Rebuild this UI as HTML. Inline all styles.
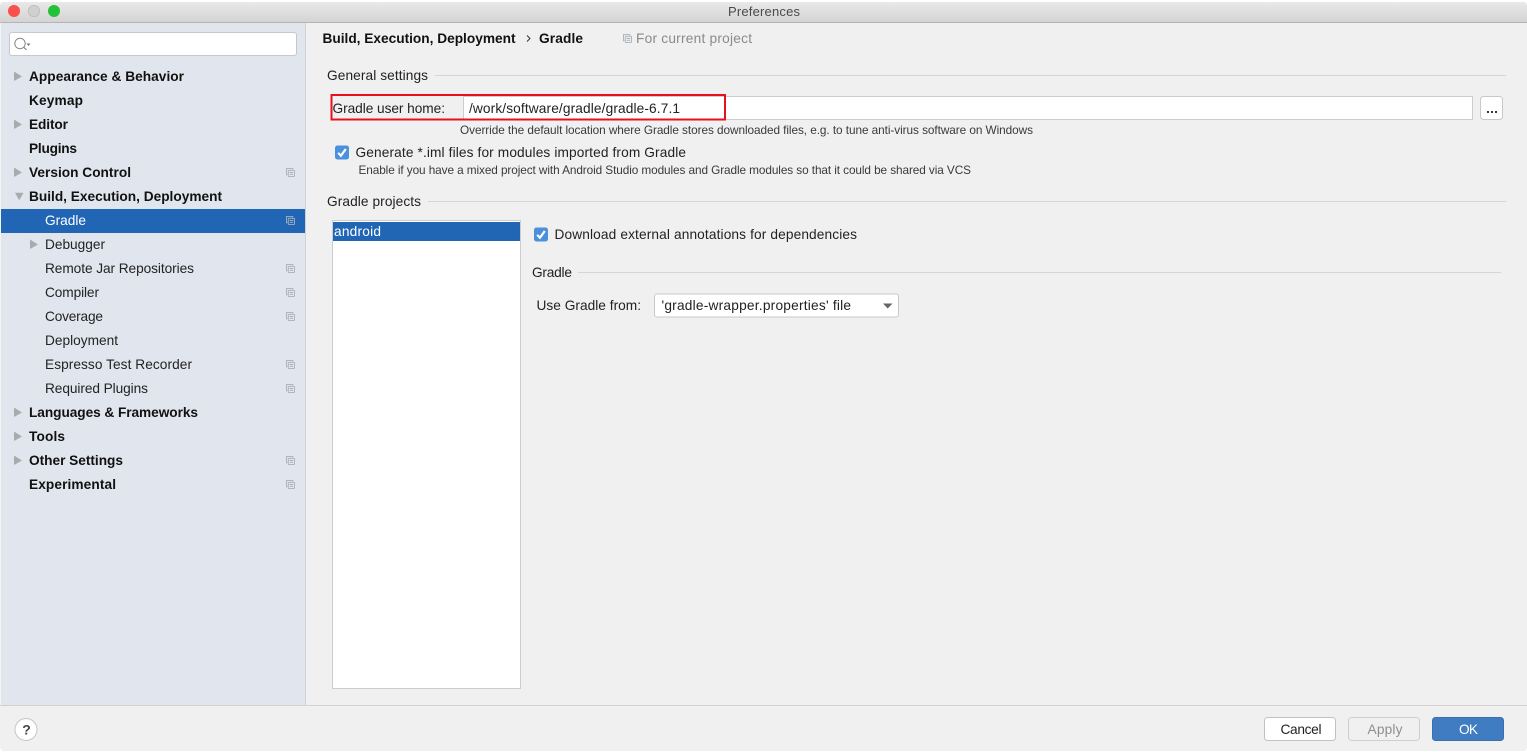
<!DOCTYPE html>
<html><head><meta charset="utf-8"><title>Preferences</title>
<style>
html,body{margin:0;padding:0;background:#fff;width:1527px;height:752px;overflow:hidden}
svg{display:block;filter:blur(.25px)}
text{font-family:"Liberation Sans",sans-serif;font-size:13.7px;fill:#222}
.b{font-weight:bold;font-size:13.7px;fill:#111}
.s{font-size:11.8px;fill:#3a3a3a}
</style></head><body>
<svg width="1527" height="752" viewBox="0 0 1527 752" xmlns="http://www.w3.org/2000/svg">
<defs>
<linearGradient id="tb" x1="0" y1="0" x2="0" y2="1"><stop offset="0" stop-color="#e9e9e9"/><stop offset="1" stop-color="#d3d3d3"/></linearGradient>
<symbol id="cp" viewBox="0 0 10 10" overflow="visible"><path d="M7.5 1.5V.5H.5V7.5H1.5" fill="none" stroke="#a9b0b8" stroke-width="1"/><rect x="2.5" y="2.5" width="7" height="7" rx="1" fill="none" stroke="#a9b0b8" stroke-width="1"/><path d="M4 5H8M4 7H8" stroke="#a9b0b8" stroke-width="1"/></symbol>
<symbol id="ck" viewBox="0 0 14 14"><rect width="14" height="14" rx="2.5" fill="#4a90dc"/><path d="M3.2 7.300L5.900 10.300L10.800 3.500" fill="none" stroke="#fff" stroke-width="2.200"/></symbol>
</defs>
<rect x="0" y="2" width="1527" height="749" rx="4" fill="#f0f0f0"/>
<!-- title bar -->
<path d="M0 22V6Q0 2 4 2H1523Q1527 2 1527 6V22Z" fill="url(#tb)"/>
<rect x="0" y="22" width="1527" height="1" fill="#b4b4b4"/>
<circle cx="14" cy="11" r="6" fill="#fb4f4b"/><circle cx="34" cy="11" r="5.6" fill="#d0d0d0" stroke="#bfbfbf"/><circle cx="54" cy="11" r="6" fill="#22c13a"/>
<text x="728" y="16" textLength="72" style="font-size:13px;fill:#4a4a4a">Preferences</text>
<!-- sidebar -->
<rect x="1" y="23" width="304" height="682" fill="#e1e6ee"/>
<rect x="305" y="23" width="1" height="682" fill="#cfd2d6"/>
<rect x="0" y="23" width="1" height="682" fill="#f4f4f4"/>
<rect x="9.500" y="32.500" width="287" height="23" rx="2.500" fill="#fff" stroke="#c6c8cb"/>
<circle cx="20" cy="43.500" r="5.200" fill="none" stroke="#858585" stroke-width="1"/><path d="M23.800 47.300L26.500 50" stroke="#858585" stroke-width="1.200"/><path d="M26.500 43.500H30.500L28.500 46Z" fill="#777"/>
<rect x="1" y="209" width="304" height="24" fill="#2066b5"/>
<g fill="#a8aaad">
<path d="M14 71.500L22 76.500L14 81Z"/><path d="M14 119.500L22 124.500L14 129Z"/><path d="M14 167.500L22 172.500L14 177Z"/><path d="M15 192.700H23.500L19.200 200.300Z"/><path d="M30 239.500L38 244.500L30 249Z"/><path d="M14 407.500L22 412.500L14 417Z"/><path d="M14 431.500L22 436.500L14 441Z"/><path d="M14 455.500L22 460.500L14 465Z"/>
</g>
<g>
<text class="b" x="29" y="81" textLength="155">Appearance &amp; Behavior</text>
<text class="b" x="29" y="105" textLength="54">Keymap</text>
<text class="b" x="29" y="129" textLength="39">Editor</text>
<text class="b" x="29" y="153" textLength="48">Plugins</text>
<text class="b" x="29" y="177" textLength="102">Version Control</text>
<text class="b" x="29" y="201" textLength="193">Build, Execution, Deployment</text>
<text x="45" y="225" textLength="41" style="fill:#fff">Gradle</text>
<text x="45" y="249" textLength="60">Debugger</text>
<text x="45" y="273" textLength="149">Remote Jar Repositories</text>
<text x="45" y="297" textLength="54">Compiler</text>
<text x="45" y="321" textLength="58">Coverage</text>
<text x="45" y="345" textLength="73">Deployment</text>
<text x="45" y="369" textLength="147">Espresso Test Recorder</text>
<text x="45" y="393" textLength="103">Required Plugins</text>
<text class="b" x="29" y="417" textLength="169">Languages &amp; Frameworks</text>
<text class="b" x="29" y="441" textLength="36">Tools</text>
<text class="b" x="29" y="465" textLength="94">Other Settings</text>
<text class="b" x="29" y="489" textLength="87">Experimental</text>
</g>
<use href="#cp" x="286" y="168" width="9" height="9"/>
<use href="#cp" x="286" y="216" width="9" height="9"/>
<use href="#cp" x="286" y="264" width="9" height="9"/>
<use href="#cp" x="286" y="288" width="9" height="9"/>
<use href="#cp" x="286" y="312" width="9" height="9"/>
<use href="#cp" x="286" y="360" width="9" height="9"/>
<use href="#cp" x="286" y="384" width="9" height="9"/>
<use href="#cp" x="286" y="456" width="9" height="9"/>
<use href="#cp" x="286" y="480" width="9" height="9"/>
<!-- header -->
<text class="b" x="322.500" y="43" textLength="193">Build, Execution, Deployment</text>
<path d="M527 35.500L530 38.500L527 41.500" fill="none" stroke="#333" stroke-width="1"/>
<text class="b" x="539" y="43" textLength="44">Gradle</text>
<use href="#cp" x="623" y="34" width="9" height="9"/>
<text x="636" y="43" textLength="116" style="fill:#8a8a8a">For current project</text>
<!-- general settings -->
<text x="327" y="80" textLength="101">General settings</text>
<rect x="435" y="75" width="1071" height="1" fill="#d5d5d5"/>
<text x="332.500" y="113" textLength="112.500">Gradle user home:</text>
<rect x="463.500" y="96.500" width="1009" height="23" fill="#fff" stroke="#cdcdcd"/>
<text x="469" y="113" textLength="211">/work/software/gradle/gradle-6.7.1</text>
<rect x="331.500" y="95" width="393.500" height="24.500" fill="none" stroke="#e8101c" stroke-width="2"/>
<rect x="1480.500" y="96.500" width="22" height="23" rx="3" fill="#fff" stroke="#c8c8c8"/>
<path d="M1487 111h2v2h-2zM1491 111h2v2h-2zM1495 111h2v2h-2z" fill="#333"/>
<text class="s" x="460" y="134" textLength="573">Override the default location where Gradle stores downloaded files, e.g. to tune anti-virus software on Windows</text>
<use href="#ck" x="335" y="145.500" width="14" height="14"/>
<text x="355.500" y="157" textLength="330.500">Generate *.iml files for modules imported from Gradle</text>
<text class="s" x="358.500" y="174" textLength="612.500">Enable if you have a mixed project with Android Studio modules and Gradle modules so that it could be shared via VCS</text>
<!-- projects -->
<text x="327" y="206" textLength="94">Gradle projects</text>
<rect x="428" y="201" width="1078" height="1" fill="#d5d5d5"/>
<rect x="332.500" y="220.500" width="188" height="468" fill="#fff" stroke="#cdcdcd"/>
<rect x="333" y="222" width="187" height="19" fill="#2066b5"/>
<text x="334" y="236" textLength="47" style="fill:#fff">android</text>
<use href="#ck" x="534" y="227.500" width="14" height="14"/>
<text x="554.500" y="239" textLength="302.500">Download external annotations for dependencies</text>
<text x="532" y="277" textLength="40">Gradle</text>
<rect x="578" y="272" width="923" height="1" fill="#d5d5d5"/>
<text x="536.500" y="310" textLength="104.500">Use Gradle from:</text>
<rect x="654.500" y="294" width="244" height="23" rx="2.500" fill="#fff" stroke="#c8c8c8"/>
<text x="661.500" y="310" textLength="189.500">'gradle-wrapper.properties' file</text>
<path d="M883 303.500H892.500L887.700 308.500Z" fill="#666"/>
<!-- footer -->
<rect x="0" y="705" width="1527" height="1" fill="#d2d2d2"/>
<circle cx="26" cy="729.500" r="11" fill="#fff" stroke="#c6c6c6"/>
<text x="22.300" y="734.500" class="b" style="font-size:14px;fill:#444">?</text>
<rect x="1264.500" y="717.500" width="71" height="23" rx="3" fill="#fff" stroke="#c2c2c2"/>
<text x="1280.500" y="734" textLength="41">Cancel</text>
<rect x="1348.500" y="717.500" width="71" height="23" rx="3" fill="#f0f0f0" stroke="#cfcfcf"/>
<text x="1367.500" y="734" textLength="35" style="fill:#8e8e8e">Apply</text>
<rect x="1432.500" y="717.500" width="71" height="23" rx="3" fill="#3f7cc2" stroke="#3a6ead"/>
<text x="1459" y="734" textLength="19" style="fill:#fff">OK</text>
</svg>
</body></html>
